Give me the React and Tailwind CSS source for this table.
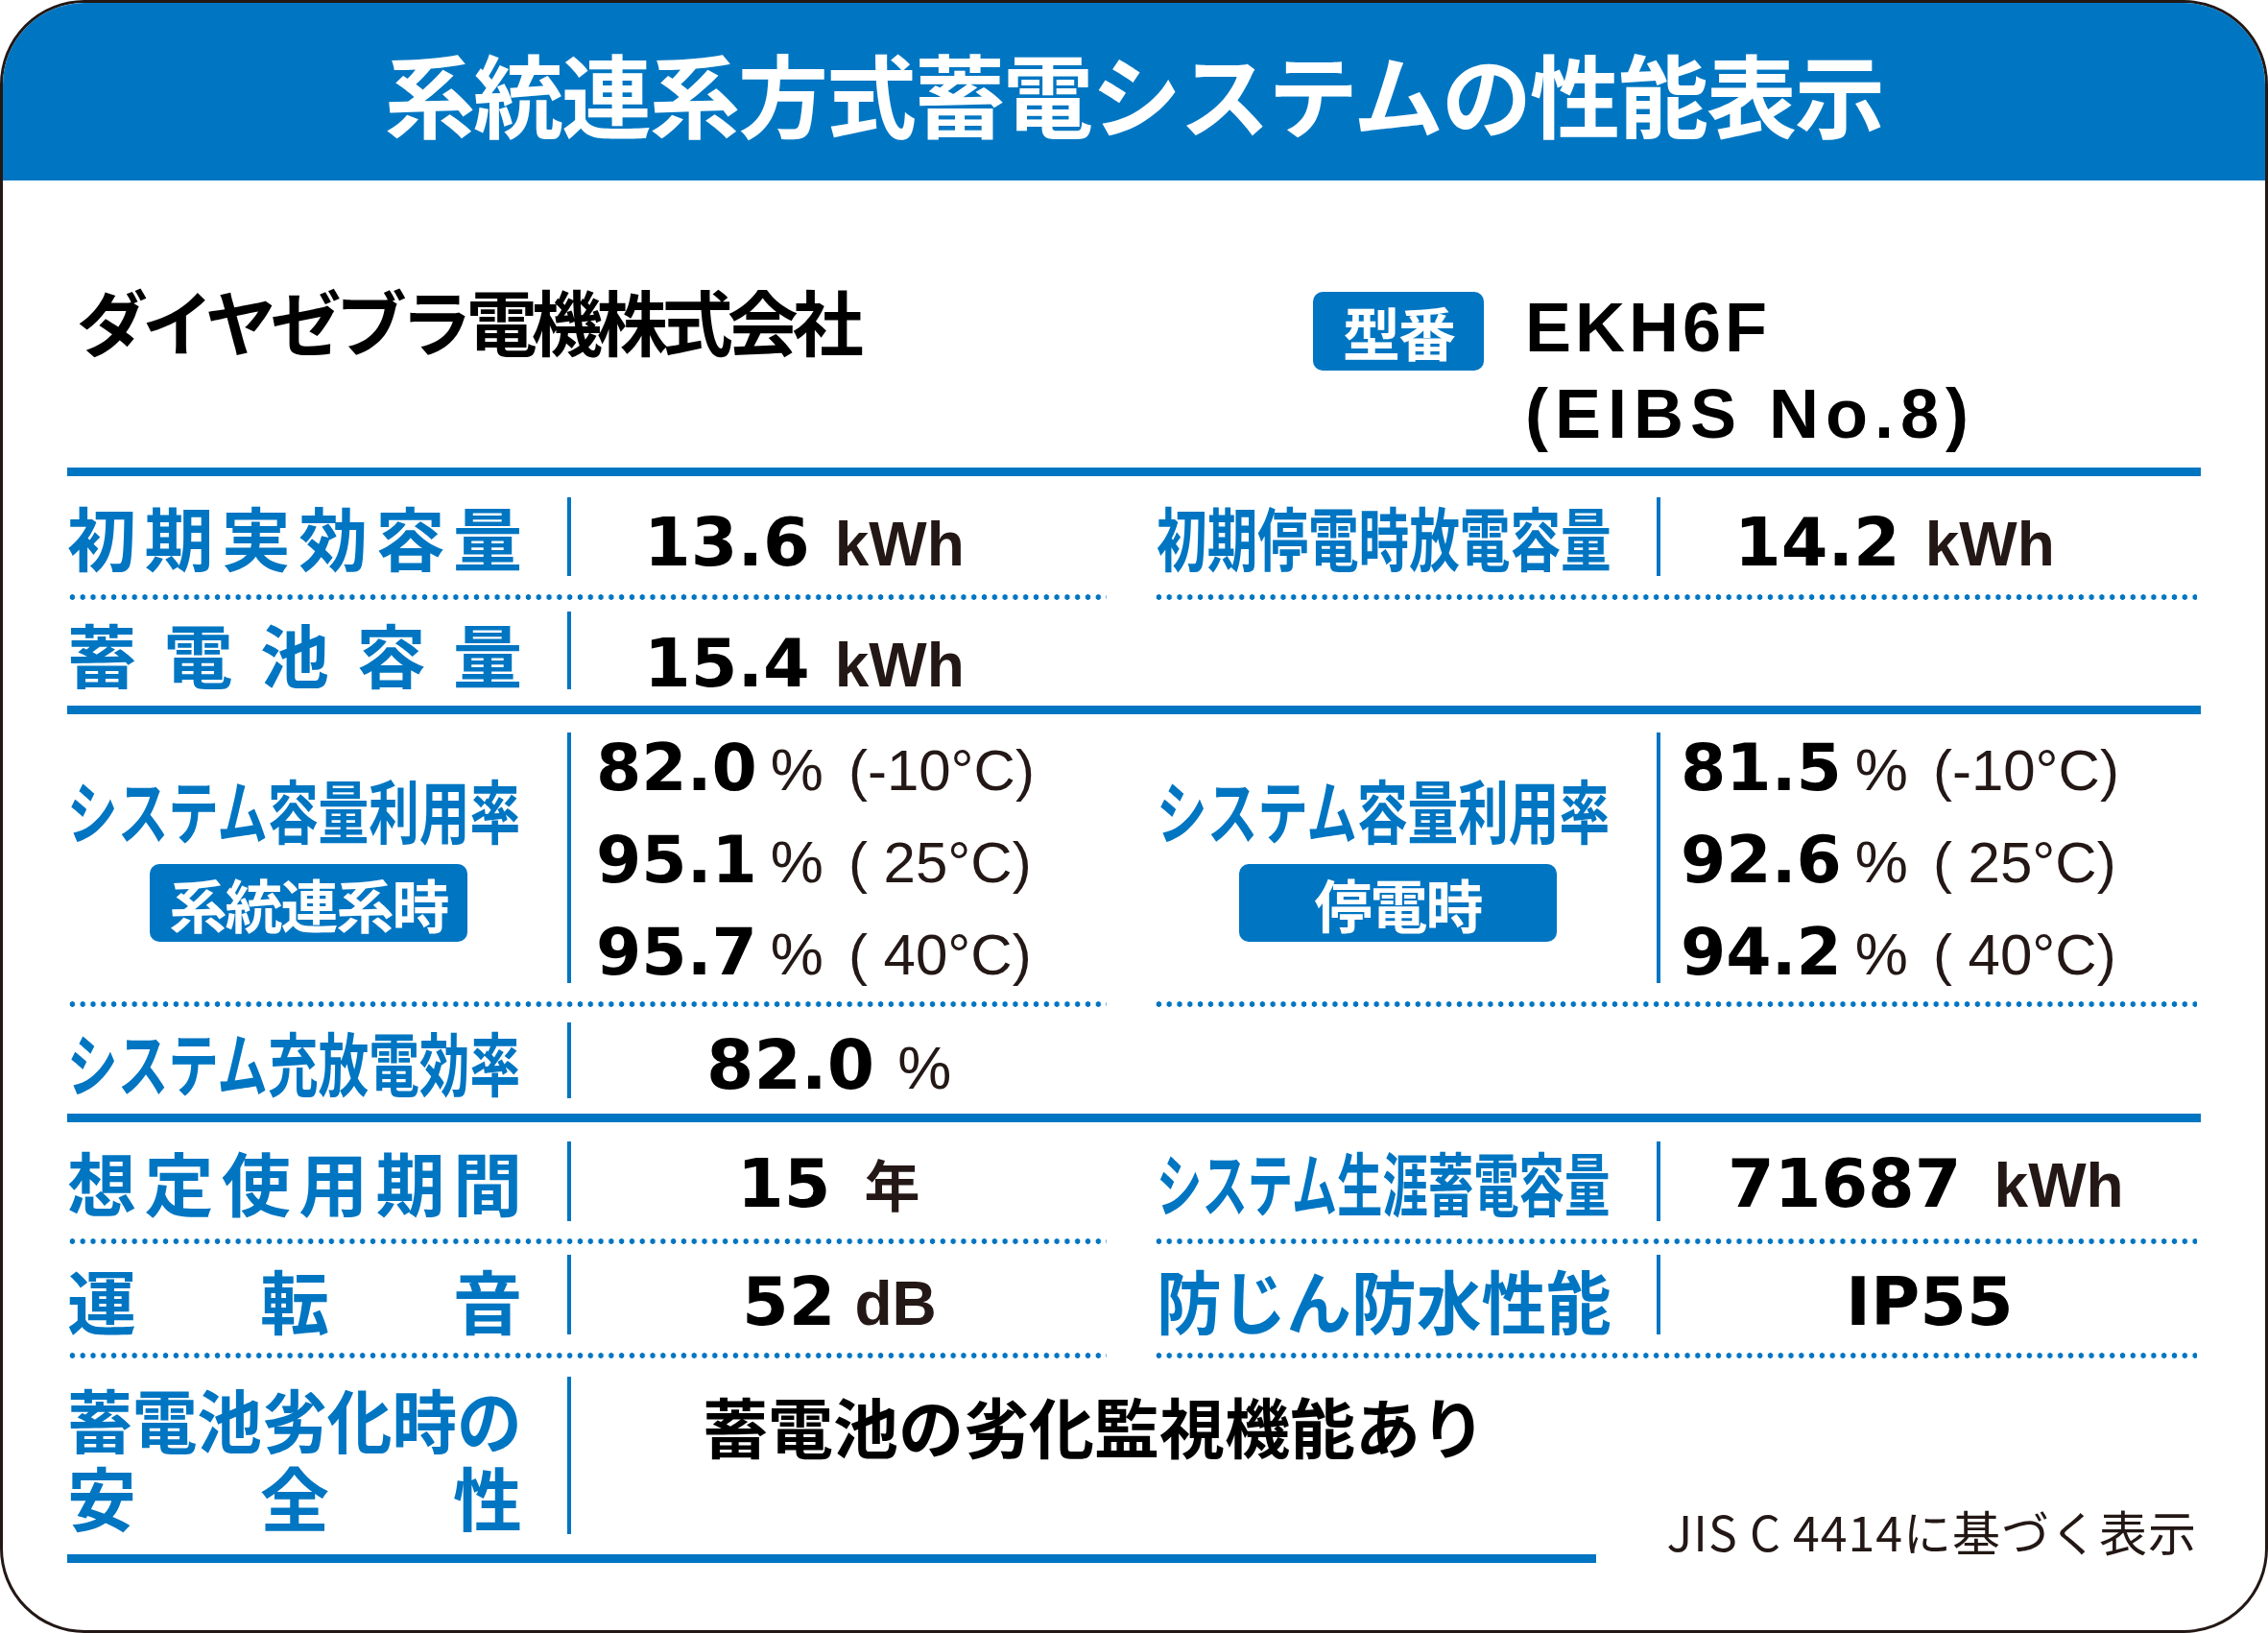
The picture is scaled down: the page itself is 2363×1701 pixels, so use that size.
const NUM = "font-['DejaVu_Sans',sans-serif] font-bold text-black";
const UNIT = "font-['Liberation_Sans',sans-serif] font-bold text-[#231815]";
const THIN = "font-['Liberation_Sans',sans-serif] font-normal text-[#231815]";

const Thick = () => <div className="h-[9px] bg-[#0075c2]" />;

const Dots = () => (
  <div className="h-[6px] bg-[radial-gradient(circle,#0075c2_2.5px,transparent_3.1px)] bg-[length:10.8px_6px]" />
);

const DotRow = () => (
  <div className="grid grid-cols-[1083px_1087px] gap-x-[49px]">
    <Dots />
    <Dots />
  </div>
);

// label spread evenly across the column
const Spread = ({ text }) => (
  <div className="flex justify-between">
    {[...text].map((c, i) => (
      <span key={i}>{c}</span>
    ))}
  </div>
);

// long labels are condensed to fit the column
const Squeeze = ({ text, scale }) => (
  <span className={`inline-block origin-left self-start whitespace-nowrap ${scale}`}>{text}</span>
);

const Half = ({ label, sep, children }) => (
  <div className="flex flex-1 items-center">
    <div className="flex w-[474px] shrink-0 flex-col text-[72px] font-bold leading-none text-[#0075c2]">
      {label}
    </div>
    <div className={`ml-[47px] w-[4px] shrink-0 self-stretch bg-[#0075c2] ${sep}`} />
    {children}
  </div>
);

const Row = ({ h, left, right }) => (
  <div className={`grid grid-cols-[1083px_1087px] grid-rows-1 gap-x-[49px] ${h}`}>
    <div className="flex min-h-0">{left}</div>
    <div className="flex min-h-0 pl-[3px]">{right}</div>
  </div>
);

const Badge = ({ children }) => (
  <div className="ml-[86px] mt-[22px] flex h-[81px] w-[331px] items-center justify-center rounded-[10px] bg-[#0075c2] text-[60px] leading-none tracking-[-2px] text-white">
    {children}
  </div>
);

const RateLine = ({ value, temp }) => (
  <div className="flex h-[96px] items-center whitespace-nowrap">
    <div className="leading-none">
      <span className={`${NUM} text-[68px]`}>{value}</span>
      <span className={`${THIN} ml-[14px] text-[62px]`}>%</span>
      <span className={`${THIN} ml-[26px] text-[60px]`}>{temp}</span>
    </div>
  </div>
);

const rates = {
  grid: [
    ["82.0", "(-10°C)"],
    ["95.1", "( 25°C)"],
    ["95.7", "( 40°C)"],
  ],
  outage: [
    ["81.5", "(-10°C)"],
    ["92.6", "( 25°C)"],
    ["94.2", "( 40°C)"],
  ],
};

const App = () => {
  return (
    <div className="h-[1701px] w-[2363px] overflow-hidden rounded-[88px] border-[3px] border-[#231815] bg-white font-['Noto_Sans_CJK_JP',sans-serif]">
      <header className="flex h-[185px] items-center justify-center bg-[#0076c2]">
        <h1 className="text-[94px] font-bold leading-none tracking-[-2px] text-white">
          系統連系方式蓄電システムの性能表示
        </h1>
      </header>

      <div className="ml-[67px] w-[2223px]">
        <section className="flex h-[299px] items-start pt-[108px]">
          <div className="w-[1298px] pl-[10px] text-[74px] font-bold leading-none tracking-[-6px] text-black">
            ダイヤゼブラ電機株式会社
          </div>
          <div className="flex items-start">
            <div className="mt-[8px] flex h-[82px] w-[178px] items-center justify-center rounded-[10px] bg-[#0075c2] text-[60px] font-bold leading-none tracking-[-2px] text-white">
              型番
            </div>
            <div className="ml-[43px] font-['Liberation_Sans',sans-serif] text-[72px] font-bold leading-[90px] text-black">
              <div className="tracking-[4px]">EKH6F</div>
              <div className="tracking-[7px]">(EIBS No.8)</div>
            </div>
          </div>
        </section>

        <Thick />

        <Row
          h="h-[123px]"
          left={
            <Half label={<Spread text="初期実効容量" />} sep="mt-[22px] mb-[19px]">
              <div className="whitespace-nowrap pl-[76px] pt-[15px] leading-none">
                <span className={`${NUM} text-[70px]`}>13.6</span>
                <span className={`${UNIT} ml-[26px] text-[64px]`}>kWh</span>
              </div>
            </Half>
          }
          right={
            <Half
              label={<Squeeze text="初期停電時放電容量" scale="scale-x-[0.731]" />}
              sep="mt-[22px] mb-[19px]"
            >
              <div className="whitespace-nowrap pl-[77px] pt-[15px] leading-none">
                <span className={`${NUM} text-[70px]`}>14.2</span>
                <span className={`${UNIT} ml-[26px] text-[64px]`}>kWh</span>
              </div>
            </Half>
          }
        />
        <DotRow />
        <Row
          h="h-[110px]"
          left={
            <Half label={<Spread text="蓄電池容量" />} sep="mt-[12px] mb-[17px]">
              <div className="whitespace-nowrap pl-[76px] pt-[21px] leading-none">
                <span className={`${NUM} text-[70px]`}>15.4</span>
                <span className={`${UNIT} ml-[26px] text-[64px]`}>kWh</span>
              </div>
            </Half>
          }
          right={null}
        />

        <Thick />

        <Row
          h="h-[299px]"
          left={
            <Half
              label={
                <>
                  <Squeeze text="システム容量利用率" scale="scale-x-[0.731]" />
                  <Badge>系統連系時</Badge>
                </>
              }
              sep="my-[19px]"
            >
              <div className="pl-[26px] pt-[4px]">
                {rates.grid.map(([v, t]) => (
                  <RateLine key={t} value={v} temp={t} />
                ))}
              </div>
            </Half>
          }
          right={
            <Half
              label={
                <>
                  <Squeeze text="システム容量利用率" scale="scale-x-[0.731]" />
                  <Badge>停電時</Badge>
                </>
              }
              sep="my-[19px]"
            >
              <div className="pl-[21px] pt-[4px]">
                {rates.outage.map(([v, t]) => (
                  <RateLine key={t} value={v} temp={t} />
                ))}
              </div>
            </Half>
          }
        />
        <DotRow />
        <Row
          h="h-[111px]"
          left={
            <Half
              label={<Squeeze text="システム充放電効率" scale="scale-x-[0.731]" />}
              sep="my-[16px]"
            >
              <div className="whitespace-nowrap pl-[141px] pt-[10px] leading-none">
                <span className={`${NUM} text-[71px]`}>82.0</span>
                <span className={`${THIN} ml-[24px] text-[63px]`}>%</span>
              </div>
            </Half>
          }
          right={null}
        />

        <Thick />

        <Row
          h="h-[121px]"
          left={
            <Half label={<Spread text="想定使用期間" />} sep="mt-[20px] mb-[18px]">
              <div className="whitespace-nowrap pl-[173px] pt-[6px] leading-none">
                <span className={`${NUM} text-[70px]`}>15</span>
                <span className="ml-[35px] text-[58px] font-bold text-[#231815]">年</span>
              </div>
            </Half>
          }
          right={
            <Half
              label={<Squeeze text="システム生涯蓄電容量" scale="scale-x-[0.658]" />}
              sep="mt-[20px] mb-[18px]"
            >
              <div className="whitespace-nowrap pl-[70px] pt-[6px] leading-none">
                <span className={`${NUM} text-[70px]`}>71687</span>
                <span className={`${UNIT} ml-[34px] text-[64px]`}>kWh</span>
              </div>
            </Half>
          }
        />
        <DotRow />
        <Row
          h="h-[113px]"
          left={
            <Half label={<Spread text="運転音" />} sep="mt-[11px] mb-[19px]">
              <div className="whitespace-nowrap pl-[178px] pt-[6px] leading-none">
                <span className={`${NUM} text-[70px]`}>52</span>
                <span className={`${UNIT} ml-[20px] text-[64px]`}>dB</span>
              </div>
            </Half>
          }
          right={
            <Half
              label={<Squeeze text="防じん防水性能" scale="scale-x-[0.94]" />}
              sep="mt-[11px] mb-[19px]"
            >
              <div className="whitespace-nowrap pl-[193px] pt-[6px] leading-none">
                <span className={`${NUM} text-[70px]`}>IP55</span>
              </div>
            </Half>
          }
        />
        <DotRow />

        <div className="flex h-[204px]">
          <div className="w-[474px] shrink-0 self-center text-[72px] font-bold leading-[81px] text-[#0075c2]">
            <div className="flex">
              <Squeeze text="蓄電池劣化時の" scale="scale-x-[0.94]" />
            </div>
            <Spread text="安全性" />
          </div>
          <div className="ml-[47px] mb-[21px] mt-[19px] w-[4px] shrink-0 bg-[#0075c2]" />
          <div className="mt-[36px] self-start whitespace-nowrap pl-[137px] text-[68px] font-bold leading-none text-black">
            蓄電池の劣化監視機能あり
          </div>
          <div className="ml-auto self-end whitespace-nowrap pr-[4px] text-[50px] leading-none tracking-[1px] text-[#231815]">
            JIS C 4414に基づく表示
          </div>
        </div>

        <div className="h-[9px] w-[1593px] bg-[#0075c2]" />
      </div>
    </div>
  );
};

export default App;
